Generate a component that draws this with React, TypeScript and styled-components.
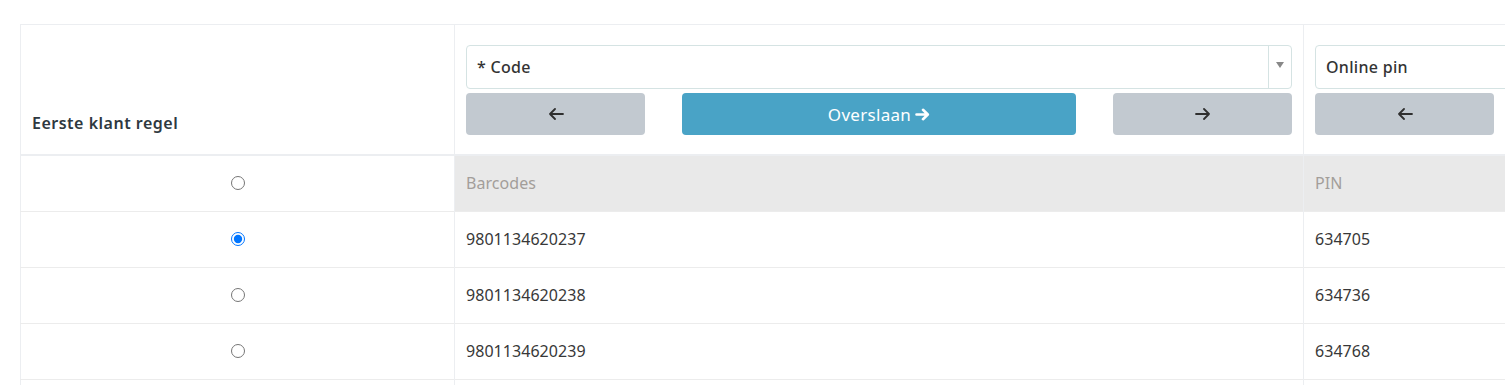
import React from "react";
import styled, { createGlobalStyle } from "styled-components";

const Global = createGlobalStyle`
  html, body { margin: 0; padding: 0; background: #fff; overflow: hidden; }
  body { font-family: "Noto Sans", "Open Sans", sans-serif; color: #333; }
`;

const Page = styled.div`
  padding: 24px 0 0 20px;
  width: 2200px;
`;

const Table = styled.table`
  border-collapse: collapse;
  table-layout: fixed;
  width: 2133px;
  border-top: 1px solid #eceef1;
  border-left: 1px solid #eceef1;
`;

const HeadRow = styled.tr`
  border-bottom: 2px solid #eceef1;
`;

const HeadCell = styled.th`
  border-right: 1px solid #eceef1;
  padding: 20px 11px 19px;
  text-align: left;
  vertical-align: bottom;
  font-weight: 600;
  font-size: 16px;
  letter-spacing: 0.5px;
  line-height: 22px;
  color: #2e3840;
`;

const LabelHeadCell = styled(HeadCell)`
  padding-bottom: 20px;
`;

const Row = styled.tr`
  border-bottom: 1px solid #ececec;
`;

const Cell = styled.td<{ $sub?: boolean }>`
  height: 56px;
  padding: 0 11px 1px;
  box-sizing: border-box;
  border-right: 1px solid #eceef1;
  font-size: 16px;
  letter-spacing: 0.05px;
  color: ${(p) => (p.$sub ? "#a39e9a" : "#383838")};
  background: ${(p) => (p.$sub ? "#e9e9e9" : "transparent")};
  vertical-align: middle;
`;

const RadioCell = styled(Cell)`
  text-align: center;
`;

const Radio = styled.input`
  display: block;
  width: 14px;
  height: 14px;
  margin: 0 auto;
`;

const SelectBox = styled.div`
  display: flex;
  height: 44px;
  box-sizing: border-box;
  border: 1px solid #d5e3e3;
  border-radius: 4px;
  background: #fff;
`;

const SelectText = styled.div`
  flex: 1;
  display: flex;
  align-items: center;
  padding-left: 10px;
  font-size: 16px;
  font-weight: 500;
  letter-spacing: 0.3px;
  color: #333;
`;

const SelectArrow = styled.div`
  width: 22px;
  border-left: 1px solid #d5e3e3;
  display: flex;
  align-items: center;
  justify-content: center;
  padding-bottom: 4px;
  &::after {
    content: "";
    border-left: 4px solid transparent;
    border-right: 4px solid transparent;
    border-top: 6px solid #888;
  }
`;

const ButtonRow = styled.div`
  display: grid;
  grid-template-columns: 179px 1fr 179px;
  column-gap: 37px;
  margin-top: 4px;
`;

const Button = styled.button<{ $primary?: boolean }>`
  height: 42px;
  border: none;
  border-radius: 4px;
  background: ${(p) => (p.$primary ? "#49a3c6" : "#c2c9d0")};
  color: ${(p) => (p.$primary ? "#fff" : "#333")};
  font-family: inherit;
  font-size: 17px;
  font-weight: 400;
  letter-spacing: 0.3px;
  display: flex;
  align-items: center;
  justify-content: center;
  gap: 4px;
  padding: 0;
  cursor: pointer;
`;

const ArrowLeft = () => (
  <svg width="16" height="12" viewBox="0 0 16 12" fill="none">
    <path d="M15 6H2M7 1L2 6l5 5" stroke="#2f2f2f" strokeWidth="1.8" strokeLinecap="round" strokeLinejoin="round" />
  </svg>
);

const ArrowRight = () => (
  <svg width="16" height="12" viewBox="0 0 16 12" fill="none">
    <path d="M1 6h13M9 1l5 5-5 5" stroke="#2f2f2f" strokeWidth="1.8" strokeLinecap="round" strokeLinejoin="round" />
  </svg>
);

const BoldArrowRight = () => (
  <svg width="15" height="13" viewBox="0 0 15 13" fill="none">
    <path d="M1.5 6.5h11M8 1.8l4.8 4.7L8 11.2" stroke="#fff" strokeWidth="2.6" strokeLinecap="round" strokeLinejoin="round" />
  </svg>
);

const rows = [
  { code: "9801134620237", pin: "634705", checked: true },
  { code: "9801134620238", pin: "634736", checked: false },
  { code: "9801134620239", pin: "634768", checked: false },
];

export default function App() {
  return (
    <>
      <Global />
      <Page>
        <Table>
          <colgroup>
            <col style={{ width: 434 }} />
            <col style={{ width: 849 }} />
            <col style={{ width: 849 }} />
          </colgroup>
          <thead>
            <HeadRow>
              <LabelHeadCell>Eerste klant regel</LabelHeadCell>
              <HeadCell>
                <SelectBox>
                  <SelectText>* Code</SelectText>
                  <SelectArrow />
                </SelectBox>
                <ButtonRow>
                  <Button aria-label="Vorige"><ArrowLeft /></Button>
                  <Button $primary>Overslaan <BoldArrowRight /></Button>
                  <Button aria-label="Volgende"><ArrowRight /></Button>
                </ButtonRow>
              </HeadCell>
              <HeadCell>
                <SelectBox>
                  <SelectText>Online pin</SelectText>
                  <SelectArrow />
                </SelectBox>
                <ButtonRow>
                  <Button aria-label="Vorige"><ArrowLeft /></Button>
                  <Button $primary aria-label="Overslaan"><BoldArrowRight /></Button>
                  <Button aria-label="Volgende"><ArrowRight /></Button>
                </ButtonRow>
              </HeadCell>
            </HeadRow>
          </thead>
          <tbody>
            <Row>
              <RadioCell><Radio type="radio" name="first" readOnly /></RadioCell>
              <Cell $sub>Barcodes</Cell>
              <Cell $sub>PIN</Cell>
            </Row>
            {rows.map((r) => (
              <Row key={r.code}>
                <RadioCell><Radio type="radio" name="first" defaultChecked={r.checked} /></RadioCell>
                <Cell>{r.code}</Cell>
                <Cell>{r.pin}</Cell>
              </Row>
            ))}
            <Row>
              <RadioCell />
              <Cell />
              <Cell />
            </Row>
          </tbody>
        </Table>
      </Page>
    </>
  );
}
